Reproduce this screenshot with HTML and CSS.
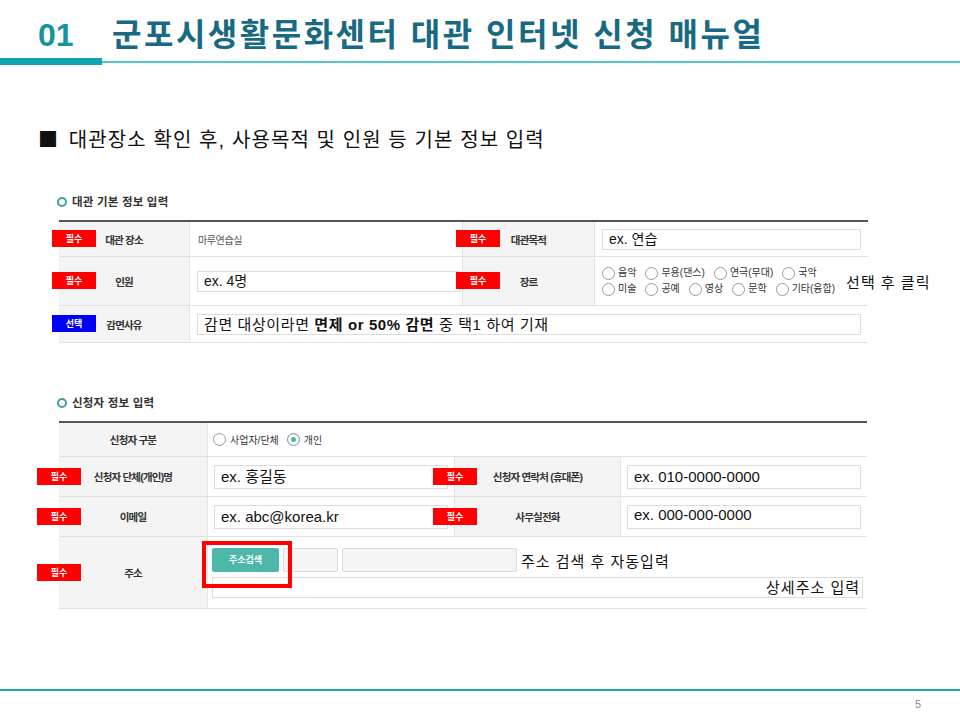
FILE: index.html
```html
<!DOCTYPE html>
<html lang="ko">
<head>
    <meta charset="UTF-8">
    <meta name="viewport" content="width=device-width, initial-scale=1.0">
    <title>군포시생활문화센터 대관 인터넷 신청 매뉴얼</title>
    <link rel="stylesheet" href="styles.css">
</head>
<body>
<div class="slide">
    <!-- 제목 -->
    <header class="page-head">
        <div class="page-title">
            <span class="num">01</span>
            <span class="title">군포시생활문화센터 대관 인터넷 신청 매뉴얼</span>
        </div>
        <div class="title-rule"><span class="rule-thick"></span><span class="rule-thin"></span></div>
    </header>

    <p class="lead"><span class="mark">■</span> 대관장소 확인 후, 사용목적 및 인원 등 기본 정보 입력</p>

    <!-- 대관 기본 정보 -->
    <section class="form-shot basic">
        <h3 class="form-heading"><span class="ring"></span>대관 기본 정보 입력</h3>
        <div class="form-table">
            <div class="cell label"><span class="badge">필수</span>대관 장소</div>
            <div class="cell value split plain">마루연습실</div>
            <div class="cell label"><span class="badge">필수</span>대관목적</div>
            <div class="cell value"><div class="field sm">ex. 연습</div></div>

            <div class="cell label"><span class="badge">필수</span>인원</div>
            <div class="cell value split tight"><div class="field sm">ex. 4명</div></div>
            <div class="cell label"><span class="badge">필수</span>장르</div>
            <div class="cell value">
                <div class="choices">
                    <div>
                        <span class="opt-item"><span class="radio"></span>음악</span>
                        <span class="opt-item"><span class="radio"></span>무용(댄스)</span>
                        <span class="opt-item"><span class="radio"></span>연극(무대)</span>
                        <span class="opt-item"><span class="radio"></span>국악</span>
                    </div>
                    <div>
                        <span class="opt-item"><span class="radio"></span>미술</span>
                        <span class="opt-item"><span class="radio"></span>공예</span>
                        <span class="opt-item"><span class="radio"></span>영상</span>
                        <span class="opt-item"><span class="radio"></span>문학</span>
                        <span class="opt-item"><span class="radio"></span>기타(융합)</span>
                    </div>
                </div>
                <span class="note">선택 후 클릭</span>
            </div>

            <div class="cell label"><span class="badge opt">선택</span>감면사유</div>
            <div class="cell value wide"><div class="field spaced">감면 대상이라면 <b>면제 or 50% 감면</b> 중 택1 하여 기재</div></div>
        </div>
    </section>

    <!-- 신청자 정보 -->
    <section class="form-shot applicant">
        <h3 class="form-heading"><span class="ring"></span>신청자 정보 입력</h3>
        <div class="form-table">
            <div class="cell label">신청자 구분</div>
            <div class="cell value wide kind">
                <span class="opt-item"><span class="radio"></span>사업자/단체</span>
                <span class="opt-item"><span class="radio on"></span>개인</span>
            </div>

            <div class="cell label"><span class="badge">필수</span>신청자 단체(개인)명</div>
            <div class="cell value split"><div class="field">ex. 홍길동</div></div>
            <div class="cell label"><span class="badge">필수</span>신청자 연락처 (휴대폰)</div>
            <div class="cell value"><div class="field">ex. 010-0000-0000</div></div>

            <div class="cell label"><span class="badge">필수</span>이메일</div>
            <div class="cell value split"><div class="field">ex. abc@korea.kr</div></div>
            <div class="cell label"><span class="badge">필수</span>사무실전화</div>
            <div class="cell value"><div class="field raised">ex. 000-000-0000</div></div>

            <div class="cell label"><span class="badge">필수</span>주소</div>
            <div class="cell value wide address">
                <div class="addr-line">
                    <span class="addr-btn">주소검색</span>
                    <span class="addr-box zip"></span>
                    <span class="addr-box road"></span>
                    <span class="note">주소 검색 후 자동입력</span>
                </div>
                <div class="field detail">상세주소 입력</div>
                <span class="callout"></span>
            </div>
        </div>
    </section>

    <footer class="page-foot">
        <div class="foot-rule"></div>
        <div class="page-num">5</div>
    </footer>
</div>
</body>
</html>
```

FILE: styles.css
```css
* {
    box-sizing: border-box;
}

body {
    margin: 0;
    font-family: "Liberation Sans", "Noto Sans CJK KR", sans-serif;
    color: #222;
    background: #fff;
}

.slide {
    width: 960px;
    height: 720px;
    display: flex;
    flex-direction: column;
    overflow: hidden;
}

/* 제목 */
.page-title {
    display: flex;
    height: 55px;
    padding: 15px 0 0 38px;
    font-size: 32px;
    line-height: 40px;
    font-weight: bold;
}

.page-title .num {
    width: 74px;
    color: #15949d;
}

.page-title .title {
    color: #186a83;
    letter-spacing: 2.5px;
}

.title-rule {
    display: flex;
    align-items: center;
    height: 7px;
    margin-top: 3px;
}

.rule-thick {
    width: 102px;
    height: 7px;
    background: #12a3b3;
}

.rule-thin {
    flex: 1;
    height: 2px;
    background: #55c6cd;
}

.lead {
    margin: 60px 0 0 38px;
    font-size: 20px;
    line-height: 28px;
    color: #111;
    letter-spacing: 1.1px;
}

.lead .mark {
    font-family: "Noto Sans CJK KR", sans-serif;
    margin-right: 3px;
}

/* 폼 캡처 */
.form-shot {
    width: 809px;
    margin: 40px 0 0 59px;
}

.form-shot.applicant {
    width: 808px;
    margin-top: 52px;
}

.form-heading {
    display: flex;
    align-items: center;
    margin: 0 0 10px -2px;
    font-size: 11.5px;
    line-height: 16px;
    font-weight: bold;
    color: #333;
    letter-spacing: 0.2px;
}

.ring {
    width: 10px;
    height: 10px;
    margin-right: 5px;
    border: 2px solid #3ba39f;
    border-radius: 50%;
}

.form-table {
    display: grid;
    border-top: 2px solid #555;
    font-size: 10px;
}

.basic .form-table {
    grid-template-columns: 131px 273px 132px 273px;
    grid-template-rows: 35px 49px 37px;
}

.applicant .form-table {
    grid-template-columns: 149px 247px 166px 246px;
    grid-template-rows: 34px 40px 40px 72px;
}

.cell {
    display: flex;
    align-items: center;
    min-width: 0;
    border-bottom: 1px solid #e2e2e2;
}

.label {
    position: relative;
    justify-content: center;
    background: #f4f4f4;
    border-right: 1px solid #e4e4e4;
    font-size: 10.5px;
    font-weight: bold;
    color: #333;
    letter-spacing: -0.8px;
    white-space: nowrap;
}

.value {
    padding: 0 7px;
}

.value.split {
    border-right: 1px solid #e4e4e4;
}

.value.plain {
    padding-left: 8px;
    color: #555;
    letter-spacing: -0.4px;
}

.value.tight {
    padding-right: 2px;
}

.wide {
    grid-column: span 3;
}

.applicant .value {
    padding: 0 6px;
}

.badge {
    position: absolute;
    left: -7px;
    top: 50%;
    width: 44px;
    height: 17px;
    margin-top: -9px;
    padding-top: 1px;
    background: #ff0000;
    color: #fff;
    font-size: 9px;
    line-height: 16px;
    font-weight: bold;
    text-align: center;
    letter-spacing: 0;
}

.badge.opt {
    background: #0000f5;
}

.applicant .badge {
    left: -22px;
}

.field {
    flex: 1;
    height: 22px;
    padding: 0 6px;
    border: 1px solid #dcdcdc;
    background: #fff;
    font-size: 15px;
    line-height: 20px;
    color: #111;
    white-space: nowrap;
}

.field.sm {
    font-size: 14px;
}

.field.spaced {
    letter-spacing: 0.6px;
}

.basic .field {
    height: 21px;
    line-height: 19px;
}

.applicant .field {
    height: 24px;
    line-height: 22px;
}

.applicant .field.raised {
    line-height: 17px;
}

/* 라디오 */
.choices {
    flex-shrink: 0;
    font-size: 10px;
    line-height: 16px;
    color: #333;
}

.choices div {
    display: flex;
}

.opt-item {
    display: inline-flex;
    align-items: center;
    margin-right: 9px;
    white-space: nowrap;
}

.radio {
    width: 13px;
    height: 13px;
    margin-right: 3px;
    border: 1px solid #999;
    border-radius: 50%;
    background: #fff;
}

.radio.on {
    background: #4cb8aa;
    box-shadow: inset 0 0 0 3px #fff;
}

.kind {
    font-size: 10px;
    color: #333;
}

.applicant .kind {
    padding-left: 5px;
}

.kind .opt-item {
    margin-right: 8px;
}

.kind .radio {
    margin-right: 4px;
}

.note {
    flex-shrink: 0;
    margin-left: 2px;
    font-size: 15px;
    color: #111;
    white-space: nowrap;
    letter-spacing: 1px;
}

/* 주소 */
.applicant .address {
    position: relative;
    flex-direction: column;
    align-items: stretch;
    padding: 11px 4px 0;
}

.addr-line {
    display: flex;
    align-items: center;
    gap: 4px;
    height: 24px;
}

.addr-btn {
    width: 67px;
    height: 24px;
    border-radius: 2px;
    background: #4db8aa;
    color: #fff;
    font-size: 9px;
    line-height: 24px;
    font-weight: bold;
    text-align: center;
}

.addr-box {
    height: 24px;
    border: 1px solid #dedede;
    border-radius: 2px;
    background: #f5f5f5;
}

.addr-box.zip {
    width: 55px;
}

.addr-box.road {
    width: 175px;
}

.addr-line .note {
    margin-left: 0;
}

.applicant .field.detail {
    flex: none;
    height: 21px;
    line-height: 19px;
    margin-top: 5px;
    text-align: right;
    padding-right: 2px;
    letter-spacing: 1px;
}

.callout {
    position: absolute;
    left: -6px;
    top: 4px;
    width: 90px;
    height: 47px;
    border: 4px solid #f00;
}

/* 하단 */
.page-foot {
    margin-top: auto;
}

.foot-rule {
    height: 2px;
    background: #22a4ae;
}

.page-num {
    margin: 6px 0 9px;
    padding-right: 39px;
    text-align: right;
    font-size: 11px;
    line-height: 14px;
    color: #888;
}
```
